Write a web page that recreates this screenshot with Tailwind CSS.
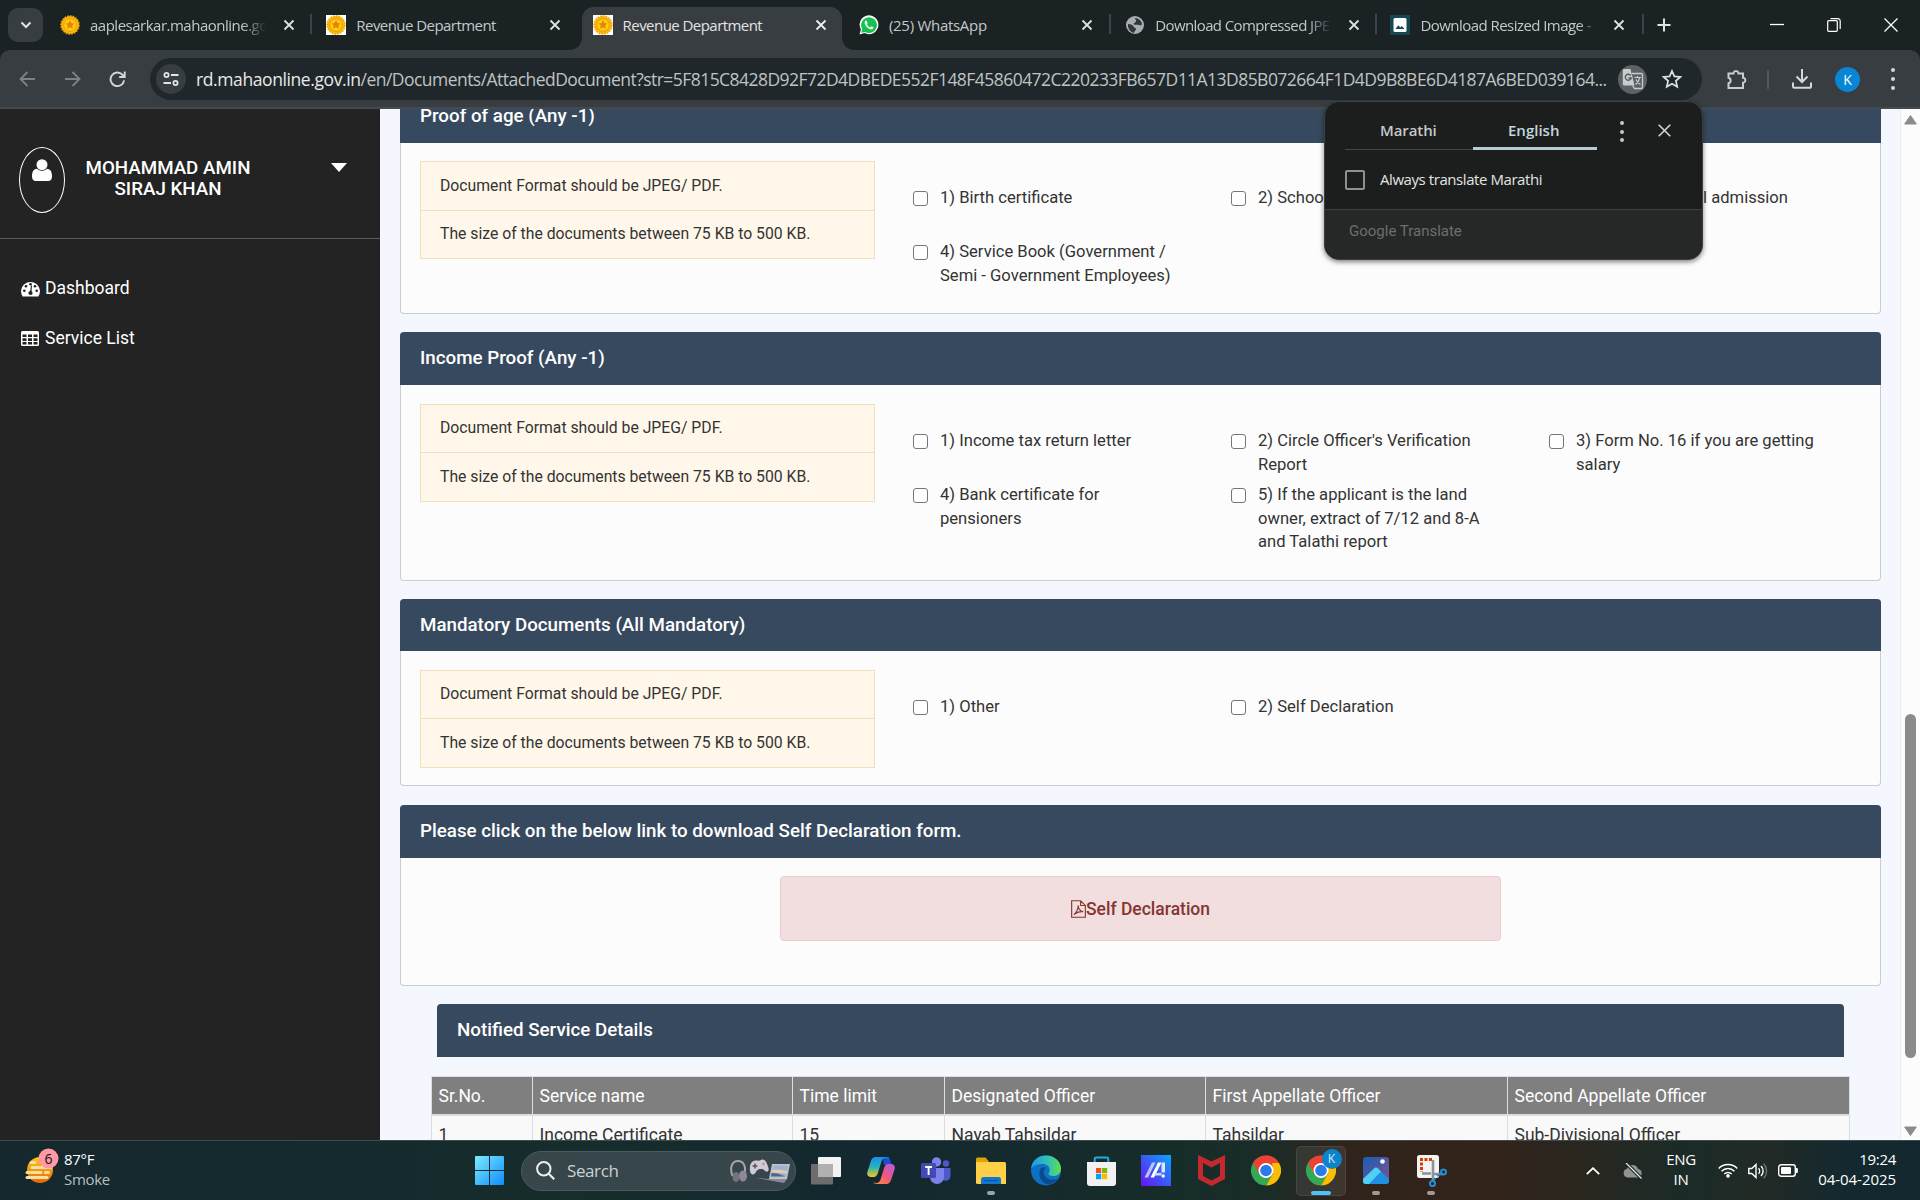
<!DOCTYPE html>
<html lang="en">
<head>
<meta charset="utf-8">
<title>Revenue Department</title>
<script src="https://cdn.jsdelivr.net/npm/@tailwindcss/browser@4"></script>
</head>
<body class="w-[1920px] h-[1200px] overflow-hidden flex flex-col bg-[#1b2224] font-['Open_Sans','Noto_Sans',sans-serif]">
<svg class="hidden">
  <defs>
    <symbol id="x" viewBox="0 0 12 12"><path d="M1.5 1.5l9 9M10.5 1.5l-9 9" stroke="currentColor" stroke-width="1.8" fill="none"/></symbol>
    <symbol id="seal" viewBox="0 0 20 20"><circle cx="10" cy="10" r="9" fill="#f9b80c"/><circle cx="10" cy="10" r="9" fill="none" stroke="#f0a30a" stroke-width="1.6" stroke-dasharray="1.6 1.2"/><circle cx="10" cy="10" r="6.3" fill="#fdd20b" stroke="#f0900e" stroke-width=".9"/><path d="M10 5l1.5 3 3 .5-2.2 2.1.6 3.2-2.9-1.5-2.9 1.5.6-3.2L5.500 8.500l3-.5z" fill="#e9800f"/></symbol>
    <symbol id="chrome" viewBox="0 0 48 48"><path d="M24 24L3.200 12A24 24 0 0 1 44.800 12z" fill="#ea4335"/><path d="M3.200 12A24 24 0 0 0 24 48L34.400 30 24 24z" fill="#34a853"/><path d="M44.800 12A24 24 0 0 1 24 48L34.400 30 34 12z" fill="#fbbc04"/><path d="M24 12H44.800A24 24 0 0 0 3.200 12L13.600 30z" fill="#ea4335"/><circle cx="24" cy="24" r="12" fill="#fff"/><circle cx="24" cy="24" r="9.300" fill="#2a7bea"/></symbol>
  </defs>
</svg>

<!-- Tab strip -->
<header class="h-[50px] shrink-0 flex items-start pl-2 text-[15px] text-[#c3c8ca]">
  <button class="mt-2 w-[35px] h-[34px] rounded-[10px] bg-[#373d40] flex items-center justify-center mr-[6px]">
    <svg class="w-[12px] h-[8px]" viewBox="0 0 12 8"><path d="M1.500 1.500L6 6l4.500-4.500" fill="none" stroke="#e3e3e3" stroke-width="2"/></svg>
  </button>
  <nav class="flex">
    <div class="relative w-[266.300px] h-[50px] flex items-center pl-[11px]">
      <svg class="w-5 h-5"><use href="#seal"/></svg>
      <span class="ml-[10px] w-[177px] overflow-hidden whitespace-nowrap tracking-[-0.5px] [mask-image:linear-gradient(to_right,#000_86%,transparent)]">aaplesarkar.mahaonline.go</span>
      <svg class="ml-[16px] w-[12px] h-[12px] text-[#dfe2e3]"><use href="#x"/></svg>
      <i class="absolute right-[3px] top-[14px] w-[2px] h-5 bg-[#3d4447]"></i>
    </div>
    <div class="relative w-[266.300px] h-[50px] flex items-center pl-[11px]">
      <span class="w-5 h-5 bg-white"><svg class="w-5 h-5"><use href="#seal"/></svg></span>
      <span class="ml-[10px] w-[177px] whitespace-nowrap tracking-[-0.55px]">Revenue Department</span>
      <svg class="ml-[16px] w-[12px] h-[12px] text-[#dfe2e3]"><use href="#x"/></svg>
    </div>
    <div class="relative w-[266.300px] h-[50px] flex items-center pl-[11px] text-[#e3e3e3]">
      <svg class="absolute left-[-14px] top-[7px] w-[288px] h-[43px]" viewBox="0 0 288 43"><path d="M0 43c9 0 14-5 14-14V12C14 5 19 0 26 0H262c7 0 12 5 12 12V29c0 9 5 14 14 14z" fill="#373d40"/></svg>
      <span class="relative w-5 h-5 bg-white"><svg class="w-5 h-5"><use href="#seal"/></svg></span>
      <span class="relative ml-[10px] w-[177px] whitespace-nowrap tracking-[-0.55px]">Revenue Department</span>
      <svg class="relative ml-[15px] w-[12px] h-[12px] text-[#f0f0f0]"><use href="#x"/></svg>
    </div>
    <div class="relative w-[266.300px] h-[50px] flex items-center pl-[11px]">
      <svg class="w-5 h-5" viewBox="0 0 20 20"><path d="M.5 19.500l1.400-5A9.400 9.400 0 1 1 5.500 18z" fill="#fff"/><path d="M2.200 17.800l1-3.600A7.900 7.900 0 1 1 6 17z" fill="#17c350"/><path d="M6.800 5.500c-1.300.6-1.500 2.200-.7 3.700 1.200 2.500 3 4.200 5.300 5 1.400.5 2.800-.2 3-1.900l-2.100-1.100-1 1.200c-1.600-.6-2.800-1.800-3.500-3.200l.8-1-.9-2.400z" fill="#fff"/></svg>
      <span class="ml-[10px] w-[177px] whitespace-nowrap tracking-[-0.28px]">(25) WhatsApp</span>
      <svg class="ml-[15px] w-[12px] h-[12px] text-[#dfe2e3]"><use href="#x"/></svg>
      <i class="absolute right-[3px] top-[14px] w-[2px] h-5 bg-[#3d4447]"></i>
    </div>
    <div class="relative w-[266.300px] h-[50px] flex items-center pl-[11px]">
      <svg class="w-5 h-5" viewBox="0 0 20 20"><circle cx="10" cy="10" r="9" fill="#a9adaf"/><path d="M3 9c3 0 5 1 5.500 2.500s2.500 1 2.500 2.500-1.500 1.500-2 4A8 8 0 0 1 3 9zM10 3c0 2 2 2 1 3.500S8 8 9 9.500c1.500 1 3-.5 5 .5s3-.5 3-1A8 8 0 0 0 10 3z" fill="#30373a"/></svg>
      <span class="ml-[10px] w-[177px] overflow-hidden whitespace-nowrap tracking-[-0.6px] [mask-image:linear-gradient(to_right,#000_86%,transparent)]">Download Compressed JPE</span>
      <svg class="ml-[16px] w-[12px] h-[12px] text-[#dfe2e3]"><use href="#x"/></svg>
      <i class="absolute right-[3px] top-[14px] w-[2px] h-5 bg-[#3d4447]"></i>
    </div>
    <div class="relative w-[266.300px] h-[50px] flex items-center pl-[10px]">
      <svg class="w-5 h-5" viewBox="0 0 20 20"><path d="M0 0h20v20H0z" fill="#154652"/><rect x="3.500" y="3" width="13" height="14" rx="1.500" fill="#fff"/><path d="M5.500 14l2.800-3.800 2 2.400 1.500-1.600 2.700 3z" fill="#154652"/></svg>
      <span class="ml-[10px] w-[177px] overflow-hidden whitespace-nowrap tracking-[-0.55px] [mask-image:linear-gradient(to_right,#000_90%,transparent)]">Download Resized Image -</span>
      <svg class="ml-[16px] w-[12px] h-[12px] text-[#dfe2e3]"><use href="#x"/></svg>
      <i class="absolute right-[3px] top-[14px] w-[2px] h-5 bg-[#3d4447]"></i>
    </div>
  </nav>
  <svg class="ml-[10px] mt-[18px] w-[14px] h-[14px]" viewBox="0 0 14 14"><path d="M7 .5v13M.5 7h13" stroke="#dfe2e3" stroke-width="2"/></svg>
  <div class="flex items-center ml-auto mr-[22px] h-[50px] gap-[43px]">
    <svg class="w-[14px] h-[14px]" viewBox="0 0 14 14"><path d="M0 6.500h14" stroke="#fff" stroke-width="1.300"/></svg>
    <svg class="w-[14px] h-[14px]" viewBox="0 0 14 14"><path d="M.7 3.700a1 1 0 0 1 1-1h7.600a1 1 0 0 1 1 1v8.600a1 1 0 0 1-1 1H1.700a1 1 0 0 1-1-1zM3.500.7H11a2.200 2.200 0 0 1 2.200 2.200V11" fill="none" stroke="#fff" stroke-width="1.200"/></svg>
    <svg class="w-[14px] h-[14px]" viewBox="0 0 14 14"><path d="M.5.500l13 13M13.500.500L.500 13.500" stroke="#fff" stroke-width="1.300"/></svg>
  </div>
</header>

<!-- Toolbar -->
<div class="h-[59px] shrink-0 bg-[#373d40] border-b-2 border-[#474a4b] rounded-t-[10px] flex items-center pl-[19px] pt-px">
  <svg class="w-4 h-4" viewBox="0 0 16 16"><path d="M16 8H2M8.500 1L1.500 8l7 7" fill="none" stroke="#7d8284" stroke-width="1.800"/></svg>
  <svg class="ml-[30px] w-4 h-4" viewBox="0 0 16 16"><path d="M0 8h14M7.500 1l7 7-7 7" fill="none" stroke="#7d8284" stroke-width="1.800"/></svg>
  <svg class="ml-[28px] w-[17px] h-[17px]" viewBox="0 0 16 16"><path d="M14.200 8.800A6.400 6.400 0 1 1 12.600 3.500L14.500 5.400M14.800.5v5.200H9.600" fill="none" stroke="#d4d8da" stroke-width="1.800"/></svg>
  <div class="ml-[24px] w-[1552px] h-[42px] rounded-full bg-[#20272a] flex items-center pl-[6px] pr-[20px]">
    <span class="w-[30px] h-[30px] shrink-0 rounded-full bg-[#373d40] flex items-center justify-center">
      <svg class="w-4 h-4" viewBox="0 0 16 16"><g fill="none" stroke="#e3e3e3" stroke-width="1.800"><circle cx="3.500" cy="4" r="2.100"/><path d="M8 4h7.500M.5 12H8"/><circle cx="12.500" cy="12" r="2.100"/></g></svg>
    </span>
    <span class="ml-[10px] w-[1422px] shrink-0 whitespace-nowrap text-[17.500px] tracking-[-0.54px] text-[#bfc3c4]"><span class="text-[#e9e9e9] tracking-[-0.4px]">rd.mahaonline.gov.in</span>/en/Documents/AttachedDocument?str=5F815C8428D92F72D4DBEDE552F148F45860472C220233FB657D11A13D85B072664F1D4D9B8BE6D4187A6BED039164...</span>
    <span class="w-[29px] h-[29px] shrink-0 rounded-full bg-[#5d6264] flex items-center justify-center">
      <svg class="w-[22px] h-[22px]" viewBox="0 0 22 22"><path d="M10 5.500h9.500a1 1 0 0 1 1 1v13a1 1 0 0 1-1 1h-7l-2-3" fill="none" stroke="#c9cccd" stroke-width="1.300"/><path d="M2 1h6.500l4 16.500H2a1.200 1.200 0 0 1-1.200-1.200V2.200A1.200 1.200 0 0 1 2 1z" fill="#c9cccd"/><path d="M8.800 7.600A3 3 0 1 0 9.200 10H6.500" fill="none" stroke="#54595b" stroke-width="1.300"/><path d="M12.500 9.500h6.500M15.500 8v1.500M13.500 16.500c2.500-1.800 3.700-4 4-6.800M14 11.500c.8 2 2.500 4 4.500 5" fill="none" stroke="#c9cccd" stroke-width="1.100"/></svg>
    </span>
    <svg class="ml-auto w-[20px] h-[20px] shrink-0" viewBox="0 0 20 20"><path d="M10 2l2.400 5.400 5.900.6-4.400 3.900 1.300 5.800L10 14.700l-5.200 3 1.300-5.800L1.700 8l5.900-.6z" fill="none" stroke="#dfe2e3" stroke-width="1.700"/></svg>
  </div>
  <svg class="ml-[24px] w-[22px] h-[22px]" viewBox="0 0 22 22"><path d="M2.500 5.500H7.500V5a2.600 2.600 0 0 1 5 0v.5h4.500v4.200h.5a2.600 2.600 0 0 1 0 5h-.5v5.300H2.500v-4.700a2.900 2.900 0 0 0 0-5.600z" fill="none" stroke="#c9cdcf" stroke-width="2"/></svg>
  <i class="ml-[19px] w-[2px] h-[19px] bg-[#50575a]"></i>
  <svg class="ml-[23px] w-[20px] h-[20px]" viewBox="0 0 20 20"><path d="M10 0v12M4.500 7.500L10 13l5.500-5.500M1 13.500v4a1.300 1.300 0 0 0 1.300 1.300h15.400A1.300 1.300 0 0 0 19 17.500v-4" fill="none" stroke="#d4d8da" stroke-width="2"/></svg>
  <span class="ml-[23px] w-[25px] h-[25px] rounded-full bg-[#0886d3] text-white text-[14px] flex items-center justify-center">K</span>
  <span class="ml-[31px] flex flex-col gap-[5px]"><i class="w-1 h-1 rounded-full bg-[#d4d8da]"></i><i class="w-1 h-1 rounded-full bg-[#d4d8da]"></i><i class="w-1 h-1 rounded-full bg-[#d4d8da]"></i></span>
</div>

<!-- Page -->
<div class="h-[1031px] shrink-0 flex overflow-hidden bg-[#f4f7fe] font-['Roboto',sans-serif] text-[#333]">
  <aside class="w-[380px] shrink-0 bg-[#232323] text-white">
    <div class="h-[130px] border-b border-[#5a5a5a] flex pl-[19px] pt-[38px]">
      <span class="w-[46px] h-[66px] rounded-[50%] border border-white flex justify-center pt-[11px]">
        <svg class="w-5 h-[22px]" viewBox="0 0 20 22"><circle cx="10" cy="5.700" r="5.500" fill="#fff"/><path d="M5 9.800C1.500 10 0 13 0 17.500 0 20 1.300 22 3.800 22h12.400c2.500 0 3.800-2 3.800-4.500 0-4.500-1.500-7.500-5-7.700a7 7 0 0 1-10 0z" fill="#fff"/></svg>
      </span>
      <p class="ml-[13px] w-[180px] mt-[11px] text-center text-[18.750px] font-medium leading-[21px]">MOHAMMAD AMIN SIRAJ KHAN</p>
      <svg class="ml-[73px] mt-[16px] w-4 h-[9px]" viewBox="0 0 16 9"><path d="M0 0h16L8 9z" fill="#fff"/></svg>
    </div>
    <ul class="pt-[37px] pl-[21px] text-[17.500px]">
      <li class="h-[24px] flex items-center gap-[5px] mb-[26px]">
        <svg class="w-[19px] h-[16px] mt-0.5" viewBox="0 0 19 16"><path d="M1.600 15.500A9.400 9.400 0 1 1 17.400 15.500z" fill="#fff"/><g fill="#232323"><circle cx="3.300" cy="9.800" r="1.300"/><circle cx="5" cy="5.300" r="1.300"/><circle cx="9.500" cy="3.300" r="1.300"/><circle cx="14" cy="5.300" r="1.300"/><circle cx="15.700" cy="9.800" r="1.300"/><circle cx="9.500" cy="12" r="2.100"/><path d="M9 11l1-6.500 1 .3-.6 6.500z"/></g></svg>
        <span>Dashboard</span>
      </li>
      <li class="h-[24px] flex items-center gap-[5px]">
        <svg class="w-[18px] h-[15px] mr-px" viewBox="0 0 18 15"><rect width="18" height="15" rx="1.500" fill="#fff"/><g fill="#232323"><path d="M1.500 3.500h4v2.600h-4zM7 3.500h4v2.600H7zM12.500 3.500h4v2.600h-4zM1.500 7.300h4v2.600h-4zM7 7.300h4v2.600H7zM12.500 7.300h4v2.600h-4zM1.500 11.100h4v2.400h-4zM7 11.100h4v2.400H7zM12.500 11.100h4v2.400h-4z"/></g></svg>
        <span>Service List</span>
      </li>
    </ul>
  </aside>

  <main class="w-[1520px] shrink-0 pl-5 text-[16.600px] leading-[24px]">
    <section class="-mt-[19px] w-[1481px] h-[224px] rounded bg-[#fcfcfc] border border-[#ccc] border-t-0">
      <h2 class="-mx-px h-[53px] px-5 pb-[2px] flex items-center bg-[#37495e] rounded-t text-white text-[18.750px] font-medium">Proof of age (Any -1)</h2>
      <div class="flex pl-[19px] pt-[18px]">
        <div class="w-[455px] h-[98px] shrink-0 bg-[#fff7e9] border border-[#f0dfba] text-[15.750px]">
          <p class="h-[49px] border-b border-[#f0dfba] pl-[19px] leading-[47px]">Document Format should be JPEG/ PDF.</p>
          <p class="pl-[19px] leading-[46px]">The size of the documents between 75 KB to 500 KB.</p>
        </div>
        <div class="ml-[38px] mt-[25px] grid grid-cols-[318px_318px_318px] auto-rows-[54px]">
          <label class="flex items-start gap-[12px]"><i class="mt-[5px] w-[15px] h-[15px] shrink-0 rounded-[3px] border border-[#767676] bg-white"></i><span class="w-[245px]">1) Birth certificate</span></label>
          <label class="flex items-start gap-[12px]"><i class="mt-[5px] w-[15px] h-[15px] shrink-0 rounded-[3px] border border-[#767676] bg-white"></i><span class="w-[245px]">2) School leaving certificate</span></label>
          <label class="flex items-start gap-[12px]"><i class="mt-[5px] w-[15px] h-[15px] shrink-0 rounded-[3px] border border-[#767676] bg-white"></i><span class="w-[212px] text-right whitespace-nowrap">3) Primary school admission</span></label>
          <label class="flex items-start gap-[12px]"><i class="mt-[5px] w-[15px] h-[15px] shrink-0 rounded-[3px] border border-[#767676] bg-white"></i><span class="w-[245px]">4) Service Book (Government / Semi - Government Employees)</span></label>
        </div>
      </div>
    </section>

    <section class="mt-[18px] w-[1481px] h-[249px] rounded bg-[#fcfcfc] border border-[#ccc] border-t-0">
      <h2 class="-mx-px h-[53px] px-5 pb-[2px] flex items-center bg-[#37495e] rounded-t text-white text-[18.750px] font-medium">Income Proof (Any -1)</h2>
      <div class="flex pl-[19px] pt-[19px]">
        <div class="w-[455px] h-[98px] shrink-0 bg-[#fff7e9] border border-[#f0dfba] text-[15.750px]">
          <p class="h-[48px] border-b border-[#f0dfba] pl-[19px] leading-[46px]">Document Format should be JPEG/ PDF.</p>
          <p class="pl-[19px] leading-[48px]">The size of the documents between 75 KB to 500 KB.</p>
        </div>
        <div class="ml-[38px] mt-[25px] grid grid-cols-[318px_318px_318px] auto-rows-[54px] leading-[23.700px]">
          <label class="flex items-start gap-[12px]"><i class="mt-[5px] w-[15px] h-[15px] shrink-0 rounded-[3px] border border-[#767676] bg-white"></i><span class="w-[245px]">1) Income tax return letter</span></label>
          <label class="flex items-start gap-[12px]"><i class="mt-[5px] w-[15px] h-[15px] shrink-0 rounded-[3px] border border-[#767676] bg-white"></i><span class="w-[245px]">2) Circle Officer's Verification Report</span></label>
          <label class="flex items-start gap-[12px]"><i class="mt-[5px] w-[15px] h-[15px] shrink-0 rounded-[3px] border border-[#767676] bg-white"></i><span class="w-[250px]">3) Form No. 16 if you are getting salary</span></label>
          <label class="flex items-start gap-[12px]"><i class="mt-[5px] w-[15px] h-[15px] shrink-0 rounded-[3px] border border-[#767676] bg-white"></i><span class="w-[200px]">4) Bank certificate for pensioners</span></label>
          <label class="flex items-start gap-[12px]"><i class="mt-[5px] w-[15px] h-[15px] shrink-0 rounded-[3px] border border-[#767676] bg-white"></i><span class="w-[240px]">5) If the applicant is the land owner, extract of 7/12 and 8-A and Talathi report</span></label>
        </div>
      </div>
    </section>

    <section class="mt-[18px] w-[1481px] h-[187px] rounded bg-[#fcfcfc] border border-[#ccc] border-t-0">
      <h2 class="-mx-px h-[52px] px-5 flex items-center bg-[#37495e] rounded-t text-white text-[18.750px] font-medium">Mandatory Documents (All Mandatory)</h2>
      <div class="flex pl-[19px] pt-[19px]">
        <div class="w-[455px] h-[98px] shrink-0 bg-[#fff7e9] border border-[#f0dfba] text-[15.750px]">
          <p class="h-[48px] border-b border-[#f0dfba] pl-[19px] leading-[46px]">Document Format should be JPEG/ PDF.</p>
          <p class="pl-[19px] leading-[48px]">The size of the documents between 75 KB to 500 KB.</p>
        </div>
        <div class="ml-[38px] mt-[25px] grid grid-cols-[318px_318px_318px] auto-rows-[54px]">
          <label class="flex items-start gap-[12px]"><i class="mt-[5px] w-[15px] h-[15px] shrink-0 rounded-[3px] border border-[#767676] bg-white"></i><span>1) Other</span></label>
          <label class="flex items-start gap-[12px]"><i class="mt-[5px] w-[15px] h-[15px] shrink-0 rounded-[3px] border border-[#767676] bg-white"></i><span>2) Self Declaration</span></label>
        </div>
      </div>
    </section>

    <section class="mt-[19px] w-[1481px] h-[181px] rounded bg-[#fcfcfc] border border-[#ccc] border-t-0">
      <h2 class="-mx-px h-[53px] px-5 pb-[2px] flex items-center bg-[#37495e] rounded-t text-white text-[18.750px] font-medium">Please click on the below link to download Self Declaration form.</h2>
      <a class="mx-auto mt-[18px] w-[721px] h-[65px] rounded border border-[#ebccd1] bg-[#f2dede] text-[#843534] text-[17.500px] font-medium flex items-center justify-center">
        <svg class="w-[15px] h-[18px]" viewBox="0 0 16 19"><path d="M.7.700h9.600l5 5v12.600H.7zM10.300.700v5h5M3 15.500c2-1 5-6 4.700-10M7.700 7c.8 3 2.500 5 5.300 5.300-3.500-.3-6.500.7-8.500 2.200" fill="none" stroke="#843534" stroke-width="1.200"/></svg>Self Declaration</a>
    </section>

    <h2 class="mt-[18px] ml-[37px] w-[1407px] h-[53px] px-5 pb-[2px] flex items-center bg-[#37495e] rounded-t text-white text-[18.750px] font-medium">Notified Service Details</h2>
    <div class="mt-[19px] ml-[31px] w-[1419px] border border-[#ddd] bg-[#f9f9f9] text-[17.500px]">
      <div class="grid grid-cols-[101px_260px_152px_261px_302px_1fr] h-[39px] bg-[#7f7f7f] text-white border-b-2 border-[#ddd] leading-[38px] divide-x divide-[#ddd]">
        <span class="pl-[6.500px]">Sr.No.</span><span class="pl-[6.500px]">Service name</span><span class="pl-[6.500px]">Time limit</span><span class="pl-[6.500px]">Designated Officer</span><span class="pl-[6.500px]">First Appellate Officer</span><span class="pl-[6.500px]">Second Appellate Officer</span>
      </div>
      <div class="grid grid-cols-[101px_260px_152px_261px_302px_1fr] h-[39px] leading-[38px] divide-x divide-[#ddd]">
        <span class="pl-[6.500px]">1</span><span class="pl-[6.500px]">Income Certificate</span><span class="pl-[6.500px]">15</span><span class="pl-[6.500px]">Nayab Tahsildar</span><span class="pl-[6.500px]">Tahsildar</span><span class="pl-[6.500px]">Sub-Divisional Officer</span>
      </div>
    </div>
  </main>

  <div class="w-5 shrink-0 bg-[#fcfcfc] border-l border-[#ececec] flex flex-col items-center pt-[6px] pb-[4px]">
    <svg class="w-[13px] h-[10px]" viewBox="0 0 13 10"><path d="M6.500.5L12.300 9H.7z" fill="#8b8b8b" stroke="#8b8b8b" stroke-linejoin="round"/></svg>
    <i class="mt-[589px] w-[11px] h-[344px] rounded-full bg-[#8b8b8b]"></i>
    <svg class="mt-auto w-[13px] h-[10px]" viewBox="0 0 13 10"><path d="M6.500 9.500L12.300 1H.7z" fill="#8b8b8b" stroke="#8b8b8b" stroke-linejoin="round"/></svg>
  </div>
</div>

<!-- Taskbar -->
<footer class="h-[60px] shrink-0 border-t border-[#3e4b4f] flex items-center text-[15px] text-white bg-[linear-gradient(90deg,#14282e_0%,#152a2d_20%,#172d2b_30%,#13282f_45%,#172d29_62%,#1a2c27_66%,#2f241b_70%,#33231a_77%,#2a261e_82%,#1b2b28_88%,#222a25_92%,#14292f_96%,#13272e_100%)]">
  <svg class="ml-[25px] mb-[9px] w-[35px] h-[36px]" viewBox="0 0 35 36"><defs><linearGradient id="sun" x2="0" y2="1"><stop stop-color="#ffc916"/><stop offset="1" stop-color="#e8650a"/></linearGradient></defs><circle cx="15" cy="22" r="13" fill="url(#sun)"/><g stroke="#f7dfa0" stroke-width="3" stroke-linecap="round"><path d="M6 14.500h4M7 19.500h19M2 24.500h14M20.500 24.500h3M2 29.500h20"/></g><circle cx="23.500" cy="10.500" r="10" fill="#ff99a4"/><text x="23.500" y="15.500" font-size="14" text-anchor="middle" fill="#111">6</text></svg>
  <div class="ml-[4px] mb-1 w-[411px] leading-5 tracking-[-0.3px]">
    <p>87°F</p><p class="text-[#b9bfc1]">Smoke</p>
  </div>
  <svg class="w-[29px] h-[29px]" viewBox="0 0 29 29"><defs><linearGradient id="win" x2="1" y2="1"><stop stop-color="#7eeaff"/><stop offset="1" stop-color="#0c8dfb"/></linearGradient></defs><path d="M1 0h13v14H0V1a1 1 0 0 1 1-1zM15 0h13a1 1 0 0 1 1 1v13H15zM0 15h14v14H1a1 1 0 0 1-1-1zM15 15h14v13a1 1 0 0 1-1 1H15z" fill="url(#win)"/></svg>
  <div class="ml-[17px] w-[275px] h-[40px] rounded-full bg-[#36464a] border border-[#4b5b5f] flex items-center pl-[14px] text-[17px] text-[#ccd1d2]">
    <svg class="w-[19px] h-[19px]" viewBox="0 0 19 19"><circle cx="7.800" cy="7.800" r="6.700" fill="none" stroke="#eee" stroke-width="2"/><path d="M12.700 12.700l5.500 5.500" stroke="#eee" stroke-width="2.200"/></svg>
    <span class="ml-[12px] w-[163px] tracking-[-0.4px]">Search</span>
    <svg class="w-[60px] h-[26px]" viewBox="0 0 60 26"><path d="M2.500 18C-1 8 3 3 8 3s9 5 6 14" fill="none" stroke="#a9a4a9" stroke-width="2"/><ellipse cx="6" cy="19" rx="3.500" ry="5" fill="#77717c"/><ellipse cx="13" cy="18" rx="4" ry="5.500" fill="#8d8894"/><path d="M22 4c4-3 6 0 9-2 4-2 6 3 7.500 8 .8 4-2 5-5 1.500-3-1-5-.5-7 1.500-2 5-6 4-6.500 0-.4-4 0-7 2-9z" fill="#cfcad8"/><path d="M22.500 8h5M25 5.500v5" stroke="#555" stroke-width="1.500"/><circle cx="33.500" cy="6" r="1.200" fill="#e0787c"/><path d="M42 6h18l-3 15H39z" fill="#b9c3d1"/><path d="M43.500 7.500h14.700l-2.300 11H41z" fill="#9db4d0"/><path d="M42.500 12l5-.5 9.500 1.500-.5 2.500-14.500-1z" fill="#e9c9b0"/><path d="M41.500 15l6 .5 8 3H41z" fill="#4f6686"/><path d="M26 20l13 1h18l-3 4z" fill="#8f8796"/></svg>
  </div>
  <div class="flex h-[60px] items-center ml-[2.500px] *:w-[55px] *:h-full *:flex *:items-center *:justify-center *:relative">
    <div><svg class="w-[30px] h-[28px]" viewBox="0 0 30 28"><rect y="7" width="22" height="20.500" rx="1" fill="#6d6d6d"/><rect x="7" width="23" height="20" rx="1" fill="#f2f2f2"/><path d="M7 7h15v13H7z" fill="#b0b0b0"/></svg></div>
    <div><svg class="w-[28px] h-[27px]" viewBox="0 0 28 27"><defs><linearGradient id="ca" x2="0" y2="1"><stop stop-color="#1b8af0"/><stop offset=".5" stop-color="#27b3b8"/><stop offset="1" stop-color="#f5c81a"/></linearGradient><linearGradient id="cb" x1="1" x2="0" y2="1"><stop stop-color="#b45be8"/><stop offset=".5" stop-color="#f0567a"/><stop offset="1" stop-color="#fb9a3a"/></linearGradient></defs><path d="M16 0h6l3 8h-8z" fill="#1a4fd0"/><path d="M18 0H8.500C5.500 0 4.300 2.500 3.300 6L.5 14.500C-.5 18 1 20 4 20h2.500c3 0 4-2.500 5-6L14 6c1-3.500 2-5 5-5 2 0 2.500 1 3 2-.5-2-1.500-3-4-3z" fill="url(#ca)"/><path d="M10 27h9.500c3 0 4.200-2.500 5.200-6l2.800-8.500C28.500 9 27 7 24 7h-2.500c-3 0-4 2.500-5 6L14 21c-1 3.500-2 5-5 5-2 0-2.500-1-3-2 .5 2 1.500 3 4 3z" fill="url(#cb)"/></svg></div>
    <div><svg class="w-[30px] h-[28px]" viewBox="0 0 30 28"><circle cx="25" cy="6.500" r="3.200" fill="#4f55cc"/><circle cx="15.500" cy="5" r="4.700" fill="#7b83eb"/><path d="M20 11h9.500v7.500a4.700 4.700 0 0 1-9.500 1z" fill="#5059c9"/><path d="M9 11h14v9a7 7 0 0 1-14 0z" fill="#7b83eb"/><rect y="6" width="15" height="15" rx="1.500" fill="#4349b5"/><path d="M4.200 10h6.800M7.600 10v8" stroke="#fff" stroke-width="1.900"/></svg></div>
    <div><svg class="w-[30px] h-[28px]" viewBox="0 0 30 28"><path d="M0 2a1.500 1.500 0 0 1 1.500-1.500h8l3 3.500V8H0z" fill="#e0a008"/><path d="M0 5h28.500A1.500 1.500 0 0 1 30 6.500V27H1.500A1.500 1.500 0 0 1 0 25.500z" fill="#ffcf48"/><path d="M5 27v-4.500A2.500 2.500 0 0 1 7.500 20h15a2.500 2.500 0 0 1 2.500 2.500V27z" fill="#0f78cc"/><path d="M8.500 23.500h13" stroke="#0a4f92" stroke-width="1"/></svg><i class="absolute bottom-[6px] w-2 h-1 rounded-full bg-[#9ba3a5]"></i></div>
    <div><svg class="w-[30px] h-[31px]" viewBox="0 0 30 31"><defs><linearGradient id="ea" x2="1"><stop stop-color="#1b9be6"/><stop offset=".6" stop-color="#35c1b1"/><stop offset="1" stop-color="#5fe04a"/></linearGradient></defs><circle cx="15" cy="15.500" r="15" fill="#0c70c4"/><path d="M0 14C1 5 7 .5 15 .5 24 .5 30 7 30 13.500c0 5-3.500 7.500-7.500 7.500-3 0-5-1-5-2.300 0-1 1.200-1.500 1.200-4C18.700 11 15 9 11 9 5 9 1 12 0 14z" fill="url(#ea)"/><path d="M10 13c-3 4-2 11 3 15 4 3 10 1 14-4.500-5 2.500-11 1-13-2.500-1.800-3-1.300-6 .5-8.500-1.500-.6-3.300-.3-4.500.5z" fill="#0b4a8f"/></svg></div>
    <div><svg class="w-[29px] h-[30px]" viewBox="0 0 29 30"><path d="M7.700 8V3a1.500 1.500 0 0 1 1.500-1.500h10.600A1.500 1.500 0 0 1 21.300 3v5" fill="none" stroke="#25a8e8" stroke-width="2"/><path d="M0 6h29v21a3 3 0 0 1-3 3H3a3 3 0 0 1-3-3z" fill="#f1f1f1"/><path d="M9 12h5.200v5.200H9z" fill="#f25022"/><path d="M15 12h5.200v5.200H15z" fill="#7fba00"/><path d="M9 18h5.200v5.200H9z" fill="#00a4ef"/><path d="M15 18h5.200v5.200H15z" fill="#ffb900"/></svg></div>
    <div><svg class="w-[30px] h-[31px]" viewBox="0 0 30 31"><defs><linearGradient id="ma" y1="1" x2="1" y2="0"><stop stop-color="#6a11f5"/><stop offset="1" stop-color="#0aa5fb"/></linearGradient></defs><path d="M0 0h30v31H0z" fill="url(#ma)"/><path d="M3.500 22.500H7L14.500 7.500H11z" fill="#b9c5ff"/><path d="M9.500 22.500H13L20.500 7.500H17z" fill="#fff"/><path d="M20.500 7.500H24v10h-3.500z" fill="#dfe6ff"/><path d="M14.500 18h6v2.500h-7.300z" fill="#cdd6ff"/><circle cx="22.200" cy="21" r="1.700" fill="#fff"/></svg></div>
    <div><svg class="w-[27px] h-[31px]" viewBox="0 0 27 31"><path d="M0 0l13.500 6.500L27 0v24l-13.500 7L0 24zM5 8v13l8.500 4.500L22 21V8l-8.500 4.500z" fill="#c5292e" fill-rule="evenodd"/></svg></div>
    <div><svg class="w-[30px] h-[31px]"><use href="#chrome"/></svg></div>
    <div><i class="absolute left-[2.500px] top-[5px] w-[50px] h-[50px] rounded-[5px] bg-white/8 border border-white/8"></i><svg class="relative w-[30px] h-[31px]"><use href="#chrome"/></svg><span class="absolute left-[28px] top-[8px] w-5 h-5 rounded-full bg-[#0c83cc] text-[12px] leading-5 text-center text-[#d6ecfa]">K</span><i class="absolute bottom-[6px] w-5 h-1 rounded-full bg-[#4cc2ff]"></i></div>
    <div><svg class="w-[26px] h-[27px]" viewBox="0 0 26 27"><defs><linearGradient id="pa" x2="1" y2="1"><stop stop-color="#1560b6"/><stop offset="1" stop-color="#8a4d8d"/></linearGradient></defs><rect width="26" height="27" rx="3" fill="url(#pa)"/><path d="M0 23L11 11.500a3 3 0 0 1 4 0L26 22v2a3 3 0 0 1-3 3H3a3 3 0 0 1-3-3z" fill="#1e90e0"/><path d="M0 22L11 11.500a3 3 0 0 1 4 0l3 3L6 27H3a3 3 0 0 1-3-3z" fill="#4fd0f7"/><circle cx="19.500" cy="4.500" r="2.300" fill="#fff"/></svg><i class="absolute bottom-[6px] w-2 h-1 rounded-full bg-[#a09a96]"></i></div>
    <div><svg class="w-[31px] h-[32px]" viewBox="0 0 31 32"><rect x="1" width="22" height="23" rx="2.500" fill="#f3f3f3"/><path d="M16 4.500H5.500V17" fill="none" stroke="#d83b01" stroke-width="3" stroke-dasharray="3 1.500"/><path d="M17 5v14h10M6 18.500h9M17 19v6" fill="none" stroke="#8d9399" stroke-width="2.600"/><circle cx="27.500" cy="17" r="2.600" fill="none" stroke="#1f8fdd" stroke-width="2"/><circle cx="16.500" cy="28.500" r="2.600" fill="none" stroke="#1f8fdd" stroke-width="2"/><path d="M25 18.500l-4 2.500M17.500 26l1.500-3" stroke="#1f8fdd" stroke-width="2"/></svg><i class="absolute bottom-[6px] w-2 h-1 rounded-full bg-[#a09a96]"></i></div>
  </div>
  <div class="ml-auto mr-[24px] flex items-center">
    <svg class="w-[14px] h-[8px]" viewBox="0 0 14 8"><path d="M.8 7.200L7 1.200l6.200 6" fill="none" stroke="#fff" stroke-width="1.800"/></svg>
    <svg class="ml-[23px] w-[20px] h-[16px]" viewBox="0 0 20 16"><path d="M4.500 14.500a4.500 4.500 0 0 1-.5-8.800 5.800 5.800 0 0 1 11 .3 4.300 4.300 0 0 1 0 8.500z" fill="#8f9391"/><path d="M3 0l15.500 15.500" stroke="#1c2b28" stroke-width="3.500"/><path d="M3 0l15.500 15.500" stroke="#e8e8e8" stroke-width="1.300"/></svg>
    <div class="ml-[23px] mb-[3px] w-[30px] leading-5 text-center tracking-[-0.3px]"><p>ENG</p><p>IN</p></div>
    <svg class="ml-[22px] w-[20px] h-[15px]" viewBox="0 0 20 15"><g fill="none" stroke="#fff" stroke-width="1.500"><path d="M.7 5.500a13 13 0 0 1 18.600 0M3.500 8.300a9 9 0 0 1 13 0M6.300 11a5.300 5.300 0 0 1 7.400 0"/></g><circle cx="10" cy="12.900" r="1.800" fill="#fff"/></svg>
    <svg class="ml-[10px] w-[20px] h-[16px]" viewBox="0 0 20 16"><g fill="none" stroke="#fff" stroke-width="1.400"><path d="M.8 5.500h3L8 1.500v13l-4.200-4h-3zM10.500 5.200a4 4 0 0 1 0 5.600M13 3a7 7 0 0 1 0 10"/><path d="M15.700.800a10.500 10.500 0 0 1 0 14.400" stroke="#6d7675"/></g></svg>
    <svg class="ml-[10px] w-[20px] h-[13px]" viewBox="0 0 20 13"><rect x=".7" y=".7" width="16.600" height="11.600" rx="2.500" fill="none" stroke="#fff" stroke-width="1.400"/><rect x="3" y="3" width="10" height="7" rx="1" fill="#fff"/><path d="M18 4.500h1.300v4H18z" fill="#fff" stroke="#fff"/></svg>
    <div class="ml-[20px] mb-1 w-[78px] whitespace-nowrap leading-5 tracking-[-0.05px] flex flex-col items-end"><p class="tracking-[-0.300px]">19:24</p><p>04-04-2025</p></div>
  </div>
</footer>

<!-- Translate bubble -->
<div class="absolute left-[1324px] top-[101px] w-[379px] h-[159px] rounded-[15px] border border-[#3c3f40] bg-[#1c1e1e] shadow-[0_2px_5px_rgba(0,0,0,0.5)] overflow-hidden text-[15px] text-[#e3e3e3]">
  <div class="h-[48px] flex pl-[20px] leading-[38px] font-semibold">
    <span class="w-[128px] h-[48px] border-b border-[#444746] pl-[35px] pt-[9px] text-[#c7c7c7] tracking-[-0.1px]">Marathi</span>
    <span class="w-[124px] h-[48px] border-b-[3px] border-[#b5cdd1] pl-[35px] pt-[9px] text-[#c2d8dc]">English</span>
    <span class="ml-[23px] mt-[19px] flex flex-col gap-[4.500px]"><i class="w-1 h-1 rounded-full bg-[#c7c7c7]"></i><i class="w-1 h-1 rounded-full bg-[#c7c7c7]"></i><i class="w-1 h-1 rounded-full bg-[#c7c7c7]"></i></span>
    <svg class="ml-[34px] mt-[22px] w-[13px] h-[13px]" viewBox="0 0 13 13"><path d="M.7.700l11.600 11.600M12.300.700L.7 12.300" stroke="#d4d4d4" stroke-width="1.600"/></svg>
  </div>
  <div class="h-[59px] flex items-center pl-[20px]">
    <i class="w-5 h-5 rounded-[2px] border-2 border-[#8e918f]"></i><span class="ml-[15px] tracking-[-0.43px]">Always translate Marathi</span>
  </div>
  <div class="h-[52px] border-t border-[#3c3f3f] bg-[#262828] pl-[24px] pt-[10px] font-['Roboto',sans-serif] text-[#6b6e70]"><span class="tracking-[0px]">Google Translate</span></div>
</div>
</body>
</html>
